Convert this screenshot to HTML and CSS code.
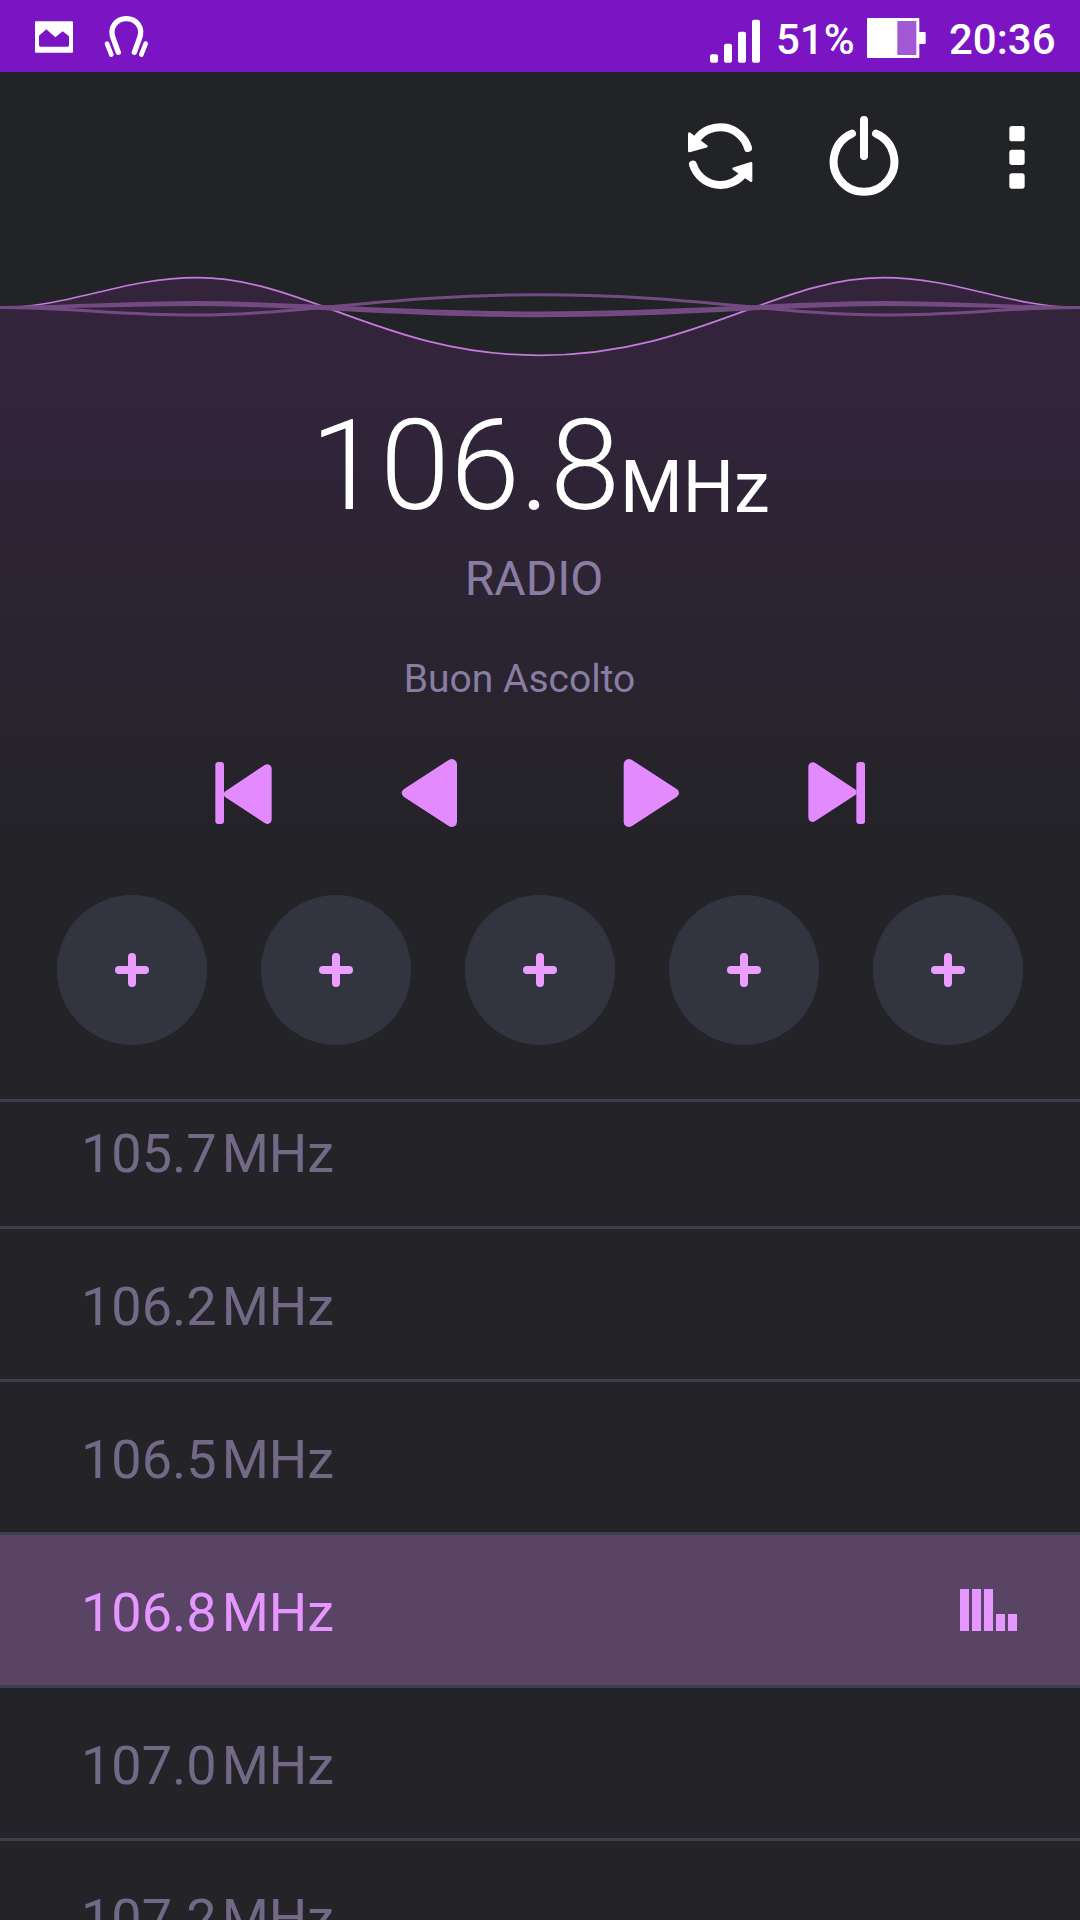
FILE: index.html
```html
<!DOCTYPE html>
<html lang="it">
<head>
<meta charset="utf-8">
<title>FM Radio</title>
<link rel="stylesheet" href="styles.css">
</head>
<body>
<header class="status">
  <svg class="status-picture" width="40" height="34" viewBox="102 60 120 102">
    <path fill="#fff" fill-rule="evenodd" d="M108 64H216Q219 64 219 67V155Q219 158 216 158H108Q105 158 105 155V67Q105 64 108 64ZM117 107V136Q117 140 121 140H203Q207 140 207 136V109L188 94L166 112L139 88Z"/>
  </svg>
  <svg class="status-headphones" width="46" height="44" viewBox="309 42 138 132" fill="none" stroke="#fff" stroke-linecap="round" stroke-linejoin="round">
    <path stroke-width="16" d="M355 157L341 119C325 82 350 56 379 56S433 82 417 119L403 157"/>
    <path stroke-width="14" d="M321 131L334 164M437 131L424 164"/>
  </svg>
  <div class="status-right">
    <svg width="50" height="44" viewBox="60 58 150 132" fill="#fff">
      <rect x="60" y="164" width="24" height="25" rx="6"/>
      <rect x="102" y="132" width="24" height="57" rx="6"/>
      <rect x="144" y="96" width="24" height="93" rx="6"/>
      <rect x="186" y="60" width="24" height="129" rx="6"/>
    </svg>
    <span class="battery-text">51%</span>
    <svg class="battery" width="59" height="40" viewBox="530 54 177 120">
      <path fill="#fff" d="M533 54H684Q687 54 687 57V96H703Q706 96 706 99V129Q706 132 703 132H687V171Q687 174 684 174H533Q530 174 530 171V57Q530 54 533 54Z"/>
      <rect x="621" y="63" width="57" height="102" fill="#a259d5"/>
    </svg>
    <span class="clock">20:36</span>
  </div>
</header>

<nav class="toolbar">
  <svg class="icon-refresh" width="66" height="68" viewBox="51 66 198 204">
    <g fill="none" stroke="#fff" stroke-width="24" stroke-linecap="round">
      <path d="M234 144A87 87 0 0 0 79 119"/>
      <path d="M69 194A87 87 0 0 0 223 218"/>
    </g>
    <g fill="#fff" stroke="#fff" stroke-width="8" stroke-linejoin="round">
      <path d="M58 101V153L109 139Z"/>
      <path d="M243 190V242L191 206Z"/>
    </g>
  </svg>
  <svg class="icon-power" width="72" height="82" viewBox="474 45 216 246" fill="none" stroke="#fff" stroke-width="24" stroke-linecap="round">
    <path d="M546 101A91 91 0 1 0 618 101M582 60V168"/>
  </svg>
  <svg class="icon-more" width="16" height="68" viewBox="1017 66 48 204" fill="#fff">
    <rect x="1018" y="78" width="46" height="46" rx="8"/>
    <rect x="1018" y="149" width="46" height="46" rx="8"/>
    <rect x="1018" y="220" width="46" height="46" rx="8"/>
  </svg>
</nav>

<svg class="wave" width="1080" height="120" viewBox="0 250 1080 120" fill="none">
  <path fill="#33243c" d="M0 307.5C70 307.5 122 277.7 197 277.7C304 277.7 385 355.3 540 355.3S776 277.7 883 277.7C958 277.7 1010 307.5 1080 307.5V370H0Z"/>
  <path stroke="#c57bdc" stroke-width="1.7" d="M0 307.5C70 307.5 122 277.7 197 277.7C304 277.7 385 355.3 540 355.3S776 277.7 883 277.7C958 277.7 1010 307.5 1080 307.5"/>
  <g stroke="#744a82" stroke-width="3">
    <path d="M0 307.5C70 307.5 120 315 195 315C303 315 385 294.7 540 294.7S777 315 885 315C960 315 1010 307.5 1080 307.5"/>
    <path d="M0 307.5C70 307.5 120 302.6 195 302.6C303 302.6 385 313 540 313S777 302.6 885 302.6C960 302.6 1010 307.5 1080 307.5"/>
    <path d="M0 307.5C70 307.5 120 304.4 195 304.4C303 304.4 385 315.7 540 315.7S777 304.4 885 304.4C960 304.4 1010 307.5 1080 307.5"/>
  </g>
</svg>

<main class="player">
  <div class="frequency"><span class="frequency-value">106.8</span><span class="frequency-unit">MHz</span></div>
  <div class="station">RADIO</div>
  <div class="message">Buon Ascolto</div>
  <div class="controls">
    <div class="control-pair">
      <svg width="57" height="70" viewBox="75 54 171 210" fill="#e48aff">
        <rect x="76" y="66" width="26" height="186" rx="9"/>
        <path d="M104 155L224 75Q232 70 239 75Q245 79 245 86V238Q245 246 239 250Q232 254 224 249L104 170Q98 162 104 155Z"/>
      </svg>
      <svg width="57" height="70" viewBox="632 54 171 210" fill="#e48aff">
        <path d="M640 148L775 60Q784 55 792 59Q800 64 800 74V245Q800 255 792 259Q784 263 775 258L640 170Q628 159 640 148Z"/>
      </svg>
    </div>
    <div class="control-pair">
      <svg width="57" height="70" viewBox="68 54 171 210" fill="#e48aff">
        <path d="M230 148L95 60Q86 55 78 59Q70 64 70 74V245Q70 255 78 259Q86 263 95 258L230 170Q242 159 230 148Z"/>
      </svg>
      <svg width="57" height="70" viewBox="624 54 171 210" fill="#e48aff">
        <rect x="769" y="66" width="26" height="186" rx="9"/>
        <path d="M767 149L646 69Q638 64 631 69Q625 73 625 80V232Q625 240 631 244Q638 248 646 243L767 164Q773 156 767 149Z"/>
      </svg>
    </div>
  </div>
</main>

<section class="presets">
  <div class="preset"></div>
  <div class="preset"></div>
  <div class="preset"></div>
  <div class="preset"></div>
  <div class="preset"></div>
</section>

<section class="stations">
  <div class="row"><span>105.7</span><span class="unit">MHz</span></div>
  <div class="row"><span>106.2</span><span class="unit">MHz</span></div>
  <div class="row"><span>106.5</span><span class="unit">MHz</span></div>
  <div class="row active"><span>106.8</span><span class="unit">MHz</span>
    <svg class="bars" width="57" height="42" viewBox="0 0 57 42" fill="#e596ff">
      <path d="M0 0H9V42H0ZM12 0H21V42H12ZM24 0H33V42H24ZM36 25H45V42H36ZM48 25H57V42H48Z"/>
    </svg>
  </div>
  <div class="row"><span>107.0</span><span class="unit">MHz</span></div>
  <div class="row"><span>107.2</span><span class="unit">MHz</span></div>
</section>
</body>
</html>
```
FILE: styles.css
```css
* { box-sizing: border-box; }

body {
  margin: 0;
  width: 1080px;
  height: 1920px;
  overflow: hidden;
  display: flex;
  flex-direction: column;
  background: #242328;
  color: #fff;
  font-family: Roboto, sans-serif;
}

svg { display: block; flex: none; }

.status {
  flex: none;
  display: flex;
  align-items: flex-start;
  height: 72px;
  padding: 0 25px 0 34px;
  background: #7b14c3;
  font-size: 42px;
  font-weight: 500;
  line-height: 50px;
}
.status-picture { margin-top: 20px; }
.status-headphones { margin: 14px 0 0 29px; }
.status-right {
  display: flex;
  align-items: flex-start;
  margin-left: auto;
  padding-top: 15px;
}
.status-right svg { margin-top: 4px; }
.battery-text { width: 91px; margin-left: 16px; white-space: nowrap; }
.status-right .battery { margin-top: 3px; }
.clock { width: 106px; margin-left: 23px; white-space: nowrap; }

.toolbar {
  flex: none;
  display: flex;
  align-items: center;
  justify-content: flex-end;
  height: 178px;
  padding: 0 55px 10px 0;
  background: #222327;
}
.icon-power { margin-left: 75px; }
.icon-more { margin-left: 109px; }

.wave { background: #222327; }

.player {
  flex: none;
  height: 480px;
  padding-top: 36px;
  background: linear-gradient(#33243c, #2c2433 40%, #28242e 70%, #242328);
  text-align: center;
}
.frequency { display: flex; justify-content: center; align-items: flex-end; }
.frequency-value { font-size: 126px; font-weight: 300; line-height: 120px; }
.frequency-unit { font-size: 72px; line-height: 76px; }
.station {
  margin-top: 25px;
  padding-right: 12px;
  color: #8a7da3;
  font-size: 48px;
  line-height: 56px;
}
.message {
  margin-top: 49px;
  padding-right: 41px;
  color: #8a7da3;
  font-size: 39px;
  line-height: 46px;
}
.controls {
  display: flex;
  justify-content: center;
  gap: 165px;
  margin-top: 56px;
}
.control-pair { display: flex; gap: 129px; }
.control-pair + .control-pair { gap: 128px; }

.presets {
  flex: none;
  display: flex;
  justify-content: center;
  gap: 54px;
  padding: 45px 0 54px;
}
.preset {
  display: grid;
  place-items: center;
  width: 150px;
  height: 150px;
  border-radius: 50%;
  background: #323440;
}
.preset::before,
.preset::after {
  content: "";
  grid-area: 1 / 1;
  width: 34px;
  height: 8px;
  border-radius: 4px;
  background: #eb9eff;
}
.preset::after { transform: rotate(90deg); }

.stations {
  flex: none;
  height: 821px;
  overflow: hidden;
  border-top: 3px solid #403d4c;
}
.row {
  display: flex;
  align-items: flex-start;
  height: 153px;
  padding: 46px 63px 0 81px;
  border-top: 3px solid #403d4c;
  color: #726987;
  font-size: 54px;
  line-height: 64px;
}
.row:first-child { margin-top: -29px; }
.unit { margin-left: 5px; }
.active { background: #5a4465; color: #e596ff; }
.bars { margin: 8px 0 0 auto; }
```
